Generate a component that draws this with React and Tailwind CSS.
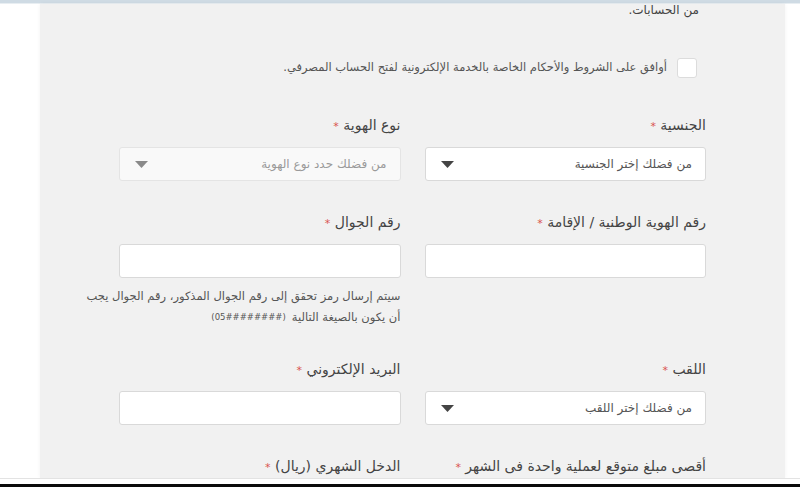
import React from "react";

const font = { fontFamily: '"DejaVu Sans", "Noto Sans", sans-serif' };

function Caret({ color = "#444" }) {
  return (
    <svg width="13" height="7" viewBox="0 0 13 7" className="shrink-0">
      <path d="M0 0 L13 0 L6.5 7 Z" fill={color} />
    </svg>
  );
}

function Label({ children }) {
  return (
    <div className="h-[20px] leading-[20px] text-[14px] text-[#444] mb-[12px] whitespace-nowrap">
      {children} <span className="text-[#d9534f] text-[11px]">*</span>
    </div>
  );
}

function Select({ placeholder, disabled }) {
  return (
    <div
      className={
        "h-[34px] rounded-[3px] border flex items-center justify-between pr-[13px] pl-[15px] " +
        (disabled
          ? "bg-[#f9f9f9] border-[#e4e4e4] text-[#9a9a9a]"
          : "bg-white border-[#d9d9d9] text-[#555]")
      }
    >
      <span className="text-[12px] whitespace-nowrap">{placeholder}</span>
      <Caret color={disabled ? "#8a8a8a" : "#444"} />
    </div>
  );
}

function Input() {
  return <div className="h-[34px] rounded-[3px] border border-[#d9d9d9] bg-white" />;
}

export default function App() {
  return (
    <div className="w-[800px] h-[487px] bg-white flex flex-col overflow-hidden" style={font}>
      <div className="h-[3px] bg-[#cfdbe4] shrink-0" />
      <div className="h-[1px] bg-[#e8eef2] shrink-0" />
      <div className="flex-1 min-h-0 flex">
        <div
          dir="rtl"
          className="ml-[40px] w-[745px] h-full bg-[#f1f1f1] overflow-hidden shadow-[0_0_4px_rgba(0,0,0,0.05)]"
        >
          <div className="px-[79px]">
            <p className="text-[12px] leading-[12px] text-[#444] pr-[7px]">من الحسابات.</p>

            <div className="mt-[42px] h-[20px] flex items-center gap-[10px] pr-[9px]">
              <div className="w-[20px] h-[20px] rounded-[3px] bg-white border border-[#dcdcdc] shrink-0" />
              <span className="text-[11.5px] text-[#555] whitespace-nowrap">
                أوافق على الشروط والأحكام الخاصة بالخدمة الإلكترونية لفتح الحساب المصرفي.
              </span>
            </div>

            <div className="mt-[37px] grid grid-cols-2 gap-x-[24px] gap-y-[31px] items-start">
              <div>
                <Label>الجنسية</Label>
                <Select placeholder="من فضلك إختر الجنسية" />
              </div>
              <div>
                <Label>نوع الهوية</Label>
                <Select placeholder="من فضلك حدد نوع الهوية" disabled />
              </div>

              <div>
                <Label>رقم الهوية الوطنية / الإقامة</Label>
                <Input />
              </div>
              <div>
                <Label>رقم الجوال</Label>
                <Input />
                <div className="mt-[8px] text-[11.5px] leading-[21px] text-[#555]">
                  <div className="whitespace-nowrap">
                    سيتم إرسال رمز تحقق إلى رقم الجوال المذكور، رقم الجوال يجب
                  </div>
                  <div className="whitespace-nowrap flex items-center gap-[6px]">
                    <span>أن يكون بالصيغة التالية</span>
                    <span dir="ltr" className="inline-block text-[8.5px]">
                      {"(05########)"}
                    </span>
                  </div>
                </div>
              </div>

              <div>
                <Label>اللقب</Label>
                <Select placeholder="من فضلك إختر اللقب" />
              </div>
              <div>
                <Label>البريد الإلكتروني</Label>
                <Input />
              </div>

              <div>
                <Label>أقصى مبلغ متوقع لعملية واحدة فى الشهر</Label>
              </div>
              <div>
                <Label>الدخل الشهري (ريال)</Label>
              </div>
            </div>
          </div>
        </div>
      </div>
      <div className="h-[1px] bg-[#e3e3e3] shrink-0" />
      <div className="h-[5px] bg-white shrink-0" />
      <div className="h-[3px] bg-[#0a0a0a] shrink-0" />
    </div>
  );
}
